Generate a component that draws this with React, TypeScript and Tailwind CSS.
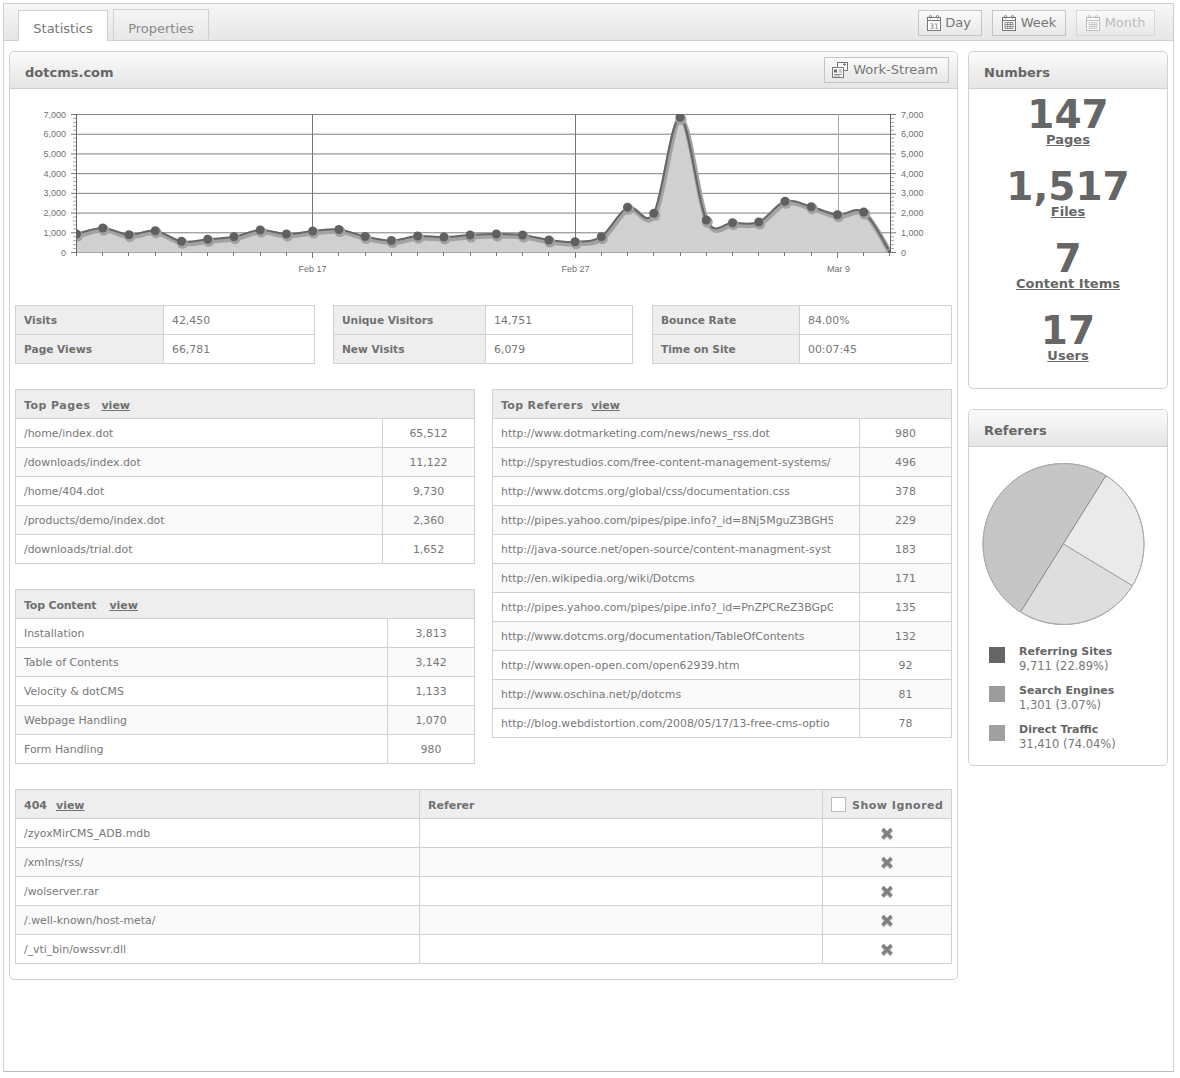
import type { ReactNode } from "react";

const FONT = "font-['DejaVu_Sans','Liberation_Sans',sans-serif]";

// pixel y of each day on the chart
const POINTS = [
  234, 228, 234.7, 230.7, 241.3, 239.3, 236.7, 230, 234, 231, 229.5, 236.5, 240.5, 236, 237, 235, 234, 235, 240, 241.8,
  236.7, 207.3, 213.3, 117.3, 220, 222.7, 222, 201.3, 206.7, 214.7, 212, 252,
];
const chartX = (i: number) => 76.5 + i * 26.24;
const gridY = (v: number) => 252.5 - v * 0.01971;

function splinePath() {
  const pts = POINTS.map((y, i) => [chartX(i), y]);
  let d = `M${pts[0][0]} ${pts[0][1]}`;
  for (let i = 0; i < pts.length - 1; i++) {
    const p0 = pts[Math.max(i - 1, 0)];
    const p1 = pts[i];
    const p2 = pts[i + 1];
    const p3 = pts[Math.min(i + 2, pts.length - 1)];
    const c1x = p1[0] + (p2[0] - p0[0]) / 6;
    const c1y = p1[1] + (p2[1] - p0[1]) / 6;
    const c2x = p2[0] - (p3[0] - p1[0]) / 6;
    const c2y = p2[1] - (p3[1] - p1[1]) / 6;
    d += ` C${c1x} ${c1y} ${c2x} ${c2y} ${p2[0]} ${p2[1]}`;
  }
  return d;
}

function Chart() {
  const line = splinePath();
  const values = [0, 1000, 2000, 3000, 4000, 5000, 6000, 7000];
  const minors: number[] = [];
  for (let v = 0; v < 7000; v += 200) if (v % 1000 !== 0) minors.push(v);
  const labelClass = "fill-[#707070]";
  const font = { fontFamily: "'Liberation Sans', sans-serif", fontSize: 9 };

  return (
    <svg className="block" width="947" height="216" viewBox="10 89 947 216">
      <defs>
        <clipPath id="plot">
          <rect x="76" y="114" width="815" height="139" />
        </clipPath>
      </defs>
      {values.map((v) => (
        <line key={v} x1="76" x2="890" y1={gridY(v)} y2={gridY(v)} stroke="#808080" />
      ))}
      {[312.5, 575.5].map((x) => (
        <line key={x} x1={x} x2={x} y1="114" y2="252" stroke="#777" />
      ))}
      <line x1="838.5" x2="838.5" y1="114" y2="252" stroke="#aaa" />
      <g clipPath="url(#plot)">
        <path d={`${line} L890 252.5 L76.5 252.5 Z`} fill="#d0d0d0" />
        <path d={line} transform="translate(1 2)" fill="none" stroke="#a2a2a2" strokeWidth="5" />
        <path d={line} fill="none" stroke="#666" strokeWidth="2" />
        {POINTS.map((y, i) => (
          <circle key={i} cx={chartX(i) + 1} cy={y + 2} r="5.5" fill="#a2a2a2" />
        ))}
        {POINTS.map((y, i) => (
          <circle key={i} cx={chartX(i)} cy={y} r={i === 31 ? 2 : 4.5} fill="#606060" />
        ))}
      </g>
      <path d="M76.5 114V252.5M890.5 114V252.5" stroke="#666" fill="none" />
      {minors.map((v) => (
        <path key={v} d={`M73 ${gridY(v)}H76M891 ${gridY(v)}H894`} stroke="#aaa" fill="none" />
      ))}
      {values.map((v) => (
        <g key={v}>
          <path d={`M71 ${gridY(v)}H76M891 ${gridY(v)}H896`} stroke="#777" fill="none" />
          <text x="66" y={gridY(v) + 3} textAnchor="end" className={labelClass} style={font}>
            {v.toLocaleString("en-US")}
          </text>
          <text x="901" y={gridY(v) + 3} className={labelClass} style={font}>
            {v.toLocaleString("en-US")}
          </text>
        </g>
      ))}
      {POINTS.map((_, i) => (
        <line
          key={i}
          x1={Math.floor(chartX(i)) + 0.5}
          x2={Math.floor(chartX(i)) + 0.5}
          y1="252"
          y2={i === 9 || i === 19 || i === 29 ? 258 : 256}
          stroke="#777"
        />
      ))}
      <text x="312.5" y="272" textAnchor="middle" className={labelClass} style={font}>
        Feb 17
      </text>
      <text x="575.5" y="272" textAnchor="middle" className={labelClass} style={font}>
        Feb 27
      </text>
      <text x="838.5" y="272" textAnchor="middle" className={labelClass} style={font}>
        Mar 9
      </text>
    </svg>
  );
}

function CalendarIcon({ kind }: { kind: "day" | "week" | "month" }) {
  return (
    <svg width="14" height="16" viewBox="0 0 14 16" fill="none" stroke="currentColor" strokeWidth="1">
      <rect x="0.5" y="2.5" width="13" height="13" fill="#fff" />
      <path d="M1 5.5H13" />
      <circle cx="3.5" cy="1.8" r="1.2" />
      <circle cx="10.5" cy="1.8" r="1.2" />
      {kind === "day" ? (
        <text x="7" y="13.5" textAnchor="middle" fill="currentColor" stroke="none" style={{ fontSize: 7.5, fontFamily: "'DejaVu Sans', sans-serif" }}>
          31
        </text>
      ) : (
        <path d="M3 7.5H11V13.5H3ZM3 9.5H11M3 11.5H11M5.7 7.5V13.5M8.3 7.5V13.5" strokeWidth="0.8" />
      )}
    </svg>
  );
}

function WorkStreamIcon() {
  return (
    <svg width="16" height="16" viewBox="0 0 16 16" fill="none" stroke="#777">
      <rect x="5.5" y="0.5" width="10" height="8" fill="#fff" />
      <rect x="0.5" y="5.5" width="11" height="10" fill="#fff" />
      <rect x="2" y="7.5" width="3" height="3" fill="#666" stroke="none" />
      <path d="M6.5 8H10M6.5 10H10M2 12.5H10M2 14H8" strokeWidth="0.8" />
      <path d="M11 2.5H14M12.5 1V4" strokeWidth="1" />
    </svg>
  );
}

function XIcon() {
  return (
    <svg className="mx-auto block" width="14" height="14" viewBox="0 0 14 14">
      <path d="M2.5 3L11.5 12M11.5 3L2.5 12" stroke="#c4c4c4" strokeWidth="4" />
      <path d="M2.5 2L11.5 11M11.5 2L2.5 11" stroke="#808080" strokeWidth="3.4" />
    </svg>
  );
}

function ToolButton({ children, disabled, className }: { children: ReactNode; disabled?: boolean; className: string }) {
  return (
    <button
      className={`flex h-[26px] items-center justify-center border text-[13px] bg-gradient-to-b from-[#fafafa] to-[#e8e8e8] ${
        disabled ? "border-[#d8d8d8] text-[#bbb]" : "border-[#c4c4c4] text-[#777]"
      } ${className}`}
    >
      {children}
    </button>
  );
}

function Panel({ title, action, children, className }: { title: string; action?: ReactNode; children: ReactNode; className: string }) {
  return (
    <section className={`rounded-[5px] border border-[#d2d2d2] bg-white ${className}`}>
      <div className="flex h-[37px] items-center justify-between rounded-t-[5px] border-b border-[#cfcfcf] bg-gradient-to-b from-[#fbfbfb] to-[#e5e5e5] pl-[15px] pr-[8px]">
        <h2 className="pt-[5px] text-[13px] font-bold text-[#666]">{title}</h2>
        {action}
      </div>
      {children}
    </section>
  );
}

const thBase = "h-[29px] border border-[#d2d2d2] bg-[#eeeeee] px-[8px] text-left font-bold text-[#707070]";
const listTh = `${thBase} pt-[4px] text-[11px]`;
const statTh = `${thBase} pt-[2px] text-[10.6px]`;
const td = "h-[29px] border border-[#d2d2d2] px-[8px] pt-[2px] text-[10.9px] text-[#777]";

function StatTable({ rows, width }: { rows: [string, string][]; width: number }) {
  return (
    <table className="table-fixed border-collapse" style={{ width: 300 }}>
      <colgroup>
        <col style={{ width }} />
        <col />
      </colgroup>
      <tbody>
        {rows.map(([label, value]) => (
          <tr key={label}>
            <th className={statTh}>{label}</th>
            <td className={td}>{value}</td>
          </tr>
        ))}
      </tbody>
    </table>
  );
}

function ListTable({ title, titleClass, viewClass, first, rows, clip }: {
  title: string;
  titleClass: string;
  viewClass: string;
  first: number;
  rows: [string, string][];
  clip?: boolean;
}) {
  return (
    <table className="w-[460px] table-fixed border-collapse">
      <colgroup>
        <col style={{ width: first }} />
        <col />
      </colgroup>
      <thead>
        <tr>
          <th colSpan={2} className={listTh}>
            <span className={titleClass}>{title}</span>
            <a className={`underline ${viewClass}`}>view</a>
          </th>
        </tr>
      </thead>
      <tbody>
        {rows.map(([name, count], i) => (
          <tr key={name} className={i % 2 === 1 ? "bg-[#fafafa]" : "bg-white"}>
            <td className={td}>
              {clip ? <div className="w-[332px] overflow-hidden whitespace-nowrap">{name}</div> : name}
            </td>
            <td className={`${td} text-center`}>{count}</td>
          </tr>
        ))}
      </tbody>
    </table>
  );
}

const TOP_PAGES: [string, string][] = [
  ["/home/index.dot", "65,512"],
  ["/downloads/index.dot", "11,122"],
  ["/home/404.dot", "9,730"],
  ["/products/demo/index.dot", "2,360"],
  ["/downloads/trial.dot", "1,652"],
];

const TOP_CONTENT: [string, string][] = [
  ["Installation", "3,813"],
  ["Table of Contents", "3,142"],
  ["Velocity & dotCMS", "1,133"],
  ["Webpage Handling", "1,070"],
  ["Form Handling", "980"],
];

const TOP_REFERERS: [string, string][] = [
  ["http://www.dotmarketing.com/news/news_rss.dot", "980"],
  ["http://spyrestudios.com/free-content-management-systems/", "496"],
  ["http://www.dotcms.org/global/css/documentation.css", "378"],
  ["http://pipes.yahoo.com/pipes/pipe.info?_id=8Nj5MguZ3BGHS", "229"],
  ["http://java-source.net/open-source/content-managment-syst", "183"],
  ["http://en.wikipedia.org/wiki/Dotcms", "171"],
  ["http://pipes.yahoo.com/pipes/pipe.info?_id=PnZPCReZ3BGpG", "135"],
  ["http://www.dotcms.org/documentation/TableOfContents", "132"],
  ["http://www.open-open.com/open62939.htm", "92"],
  ["http://www.oschina.net/p/dotcms", "81"],
  ["http://blog.webdistortion.com/2008/05/17/13-free-cms-optio", "78"],
];

const NOT_FOUND = ["/zyoxMirCMS_ADB.mdb", "/xmlns/rss/", "/wolserver.rar", "/.well-known/host-meta/", "/_vti_bin/owssvr.dll"];

const NUMBERS = [
  ["147", "Pages"],
  ["1,517", "Files"],
  ["7", "Content Items"],
  ["17", "Users"],
];

const LEGEND = [
  ["Referring Sites", "9,711 (22.89%)", "bg-[#666666]"],
  ["Search Engines", "1,301 (3.07%)", "bg-[#9c9c9c]"],
  ["Direct Traffic", "31,410 (74.04%)", "bg-[#a0a0a0]"],
];

function PieChart() {
  return (
    <svg className="block" width="198" height="198" viewBox="969 447 198 198">
      <circle cx="1063.5" cy="544" r="80.5" fill="#c6c6c6" stroke="#aaa" />
      <path d="M1063.5 544L1105.7 476A80.5 80.5 0 0 1 1132.3 585.7Z" fill="#eaeaea" />
      <path d="M1063.5 544L1132.3 585.7A80.5 80.5 0 0 1 1021 611.3Z" fill="#dedede" />
      <circle cx="1063.5" cy="544" r="80.5" fill="none" stroke="#aaa" />
      <path d="M1105.7 476L1021 611.3" stroke="#888" fill="none" />
      <path d="M1063.5 544L1132.3 585.7" stroke="#999" fill="none" />
    </svg>
  );
}

export default function App() {
  return (
    <div className={`h-[1078px] w-[1180px] bg-white pl-[3px] pt-[3px] ${FONT}`}>
      <div className="h-[1069px] w-[1171px] border border-[#cfcfcf] border-b-[#bbb]">
        <header className="flex h-[37px] items-end justify-between border-b border-[#cfcfcf] bg-gradient-to-b from-[#f7f7f7] to-[#e6e6e6] pl-[14px] pr-[18px]">
          <div className="flex gap-[5px]">
            <div className="relative top-[1px] flex h-[31px] w-[90px] items-center justify-center border border-b-0 border-[#d0d0d0] bg-white pt-[6px] text-[13px] text-[#777]">
              Statistics
            </div>
            <div className="flex h-[30px] w-[96px] items-center justify-center border border-b-0 border-[#d0d0d0] bg-gradient-to-b from-[#f4f4f4] to-[#e8e8e8] pt-[8px] text-[13px] text-[#888]">
              Properties
            </div>
          </div>
          <div className="flex gap-[10px] self-start pt-[6px]">
            <ToolButton className="w-[64px] gap-[4px] pr-[2px]">
              <CalendarIcon kind="day" />
              <span>Day</span>
            </ToolButton>
            <ToolButton className="w-[74px] gap-[5px]">
              <CalendarIcon kind="week" />
              <span>Week</span>
            </ToolButton>
            <ToolButton className="w-[79px] gap-[5px]" disabled>
              <CalendarIcon kind="month" />
              <span>Month</span>
            </ToolButton>
          </div>
        </header>

        <div className="flex items-start gap-[10px] pl-[5px] pt-[10px]">
          <Panel
            title="dotcms.com"
            className="w-[949px]"
            action={
              <ToolButton className="w-[125px] gap-[5px] pr-[3px]">
                <WorkStreamIcon />
                <span>Work-Stream</span>
              </ToolButton>
            }
          >
            <Chart />
            <div className="flex flex-col gap-[25px] px-[5px] pb-[15px]">
              <div className="flex gap-[18px]">
                <StatTable width={148} rows={[["Visits", "42,450"], ["Page Views", "66,781"]]} />
                <StatTable width={152} rows={[["Unique Visitors", "14,751"], ["New Visits", "6,079"]]} />
                <div className="ml-[1px]">
                  <StatTable width={147} rows={[["Bounce Rate", "84.00%"], ["Time on Site", "00:07:45"]]} />
                </div>
              </div>
              <div className="flex justify-between">
                <div className="flex flex-col gap-[25px]">
                  <ListTable title="Top Pages" titleClass="tracking-[0.45px]" viewClass="ml-[11px]" first={367} rows={TOP_PAGES} />
                  <ListTable title="Top Content" titleClass="tracking-[-0.2px]" viewClass="ml-[13px]" first={372} rows={TOP_CONTENT} />
                </div>
                <div>
                  <ListTable title="Top Referers" titleClass="tracking-[0.33px]" viewClass="ml-[8px]" first={367} rows={TOP_REFERERS} clip />
                </div>
              </div>
              <table className="w-[937px] table-fixed border-collapse">
                <colgroup>
                  <col className="w-[404px]" />
                  <col className="w-[403px]" />
                  <col />
                </colgroup>
                <thead>
                  <tr>
                    <th className={listTh}>
                      404
                      <a className="ml-[9px] underline">view</a>
                    </th>
                    <th className={listTh}>Referer</th>
                    <th className={listTh}>
                      <span className="flex items-center gap-[6px] whitespace-nowrap tracking-[0.5px]">
                        <span className="relative -top-[2px] h-[15px] w-[15px] shrink-0 border border-[#bbb] bg-white" />
                        Show Ignored
                      </span>
                    </th>
                  </tr>
                </thead>
                <tbody>
                  {NOT_FOUND.map((path, i) => (
                    <tr key={path} className={i % 2 === 1 ? "bg-[#fafafa]" : "bg-white"}>
                      <td className={td}>{path}</td>
                      <td className={td}></td>
                      <td className={td}>
                        <XIcon />
                      </td>
                    </tr>
                  ))}
                </tbody>
              </table>
            </div>
          </Panel>

          <div className="flex w-[200px] flex-col gap-[20px]">
            <Panel title="Numbers" className="w-[200px]">
              <div className="pb-[4px] pt-[7px] text-center text-[#666]">
                {NUMBERS.map(([value, label]) => (
                  <div key={label} className="mb-[20px]">
                    <div className="pt-[2px] text-[39px] font-bold leading-[34px]">{value}</div>
                    <a className="block text-[13px] font-bold leading-[16px] underline">{label}</a>
                  </div>
                ))}
              </div>
            </Panel>
            <Panel title="Referers" className="w-[200px]">
              <PieChart />
              <div className="pb-[3px] pl-[20px]">
                {LEGEND.map(([label, value, swatch]) => (
                  <div key={label} className="mb-[11px] flex gap-[14px]">
                    <span className={`mt-[2px] h-[16px] w-[16px] ${swatch}`} />
                    <div className="text-[11.5px] leading-[14px] text-[#777]">
                      <div className="text-[11px] font-bold text-[#666]">{label}</div>
                      <div>{value}</div>
                    </div>
                  </div>
                ))}
              </div>
            </Panel>
          </div>
        </div>
      </div>
    </div>
  );
}
